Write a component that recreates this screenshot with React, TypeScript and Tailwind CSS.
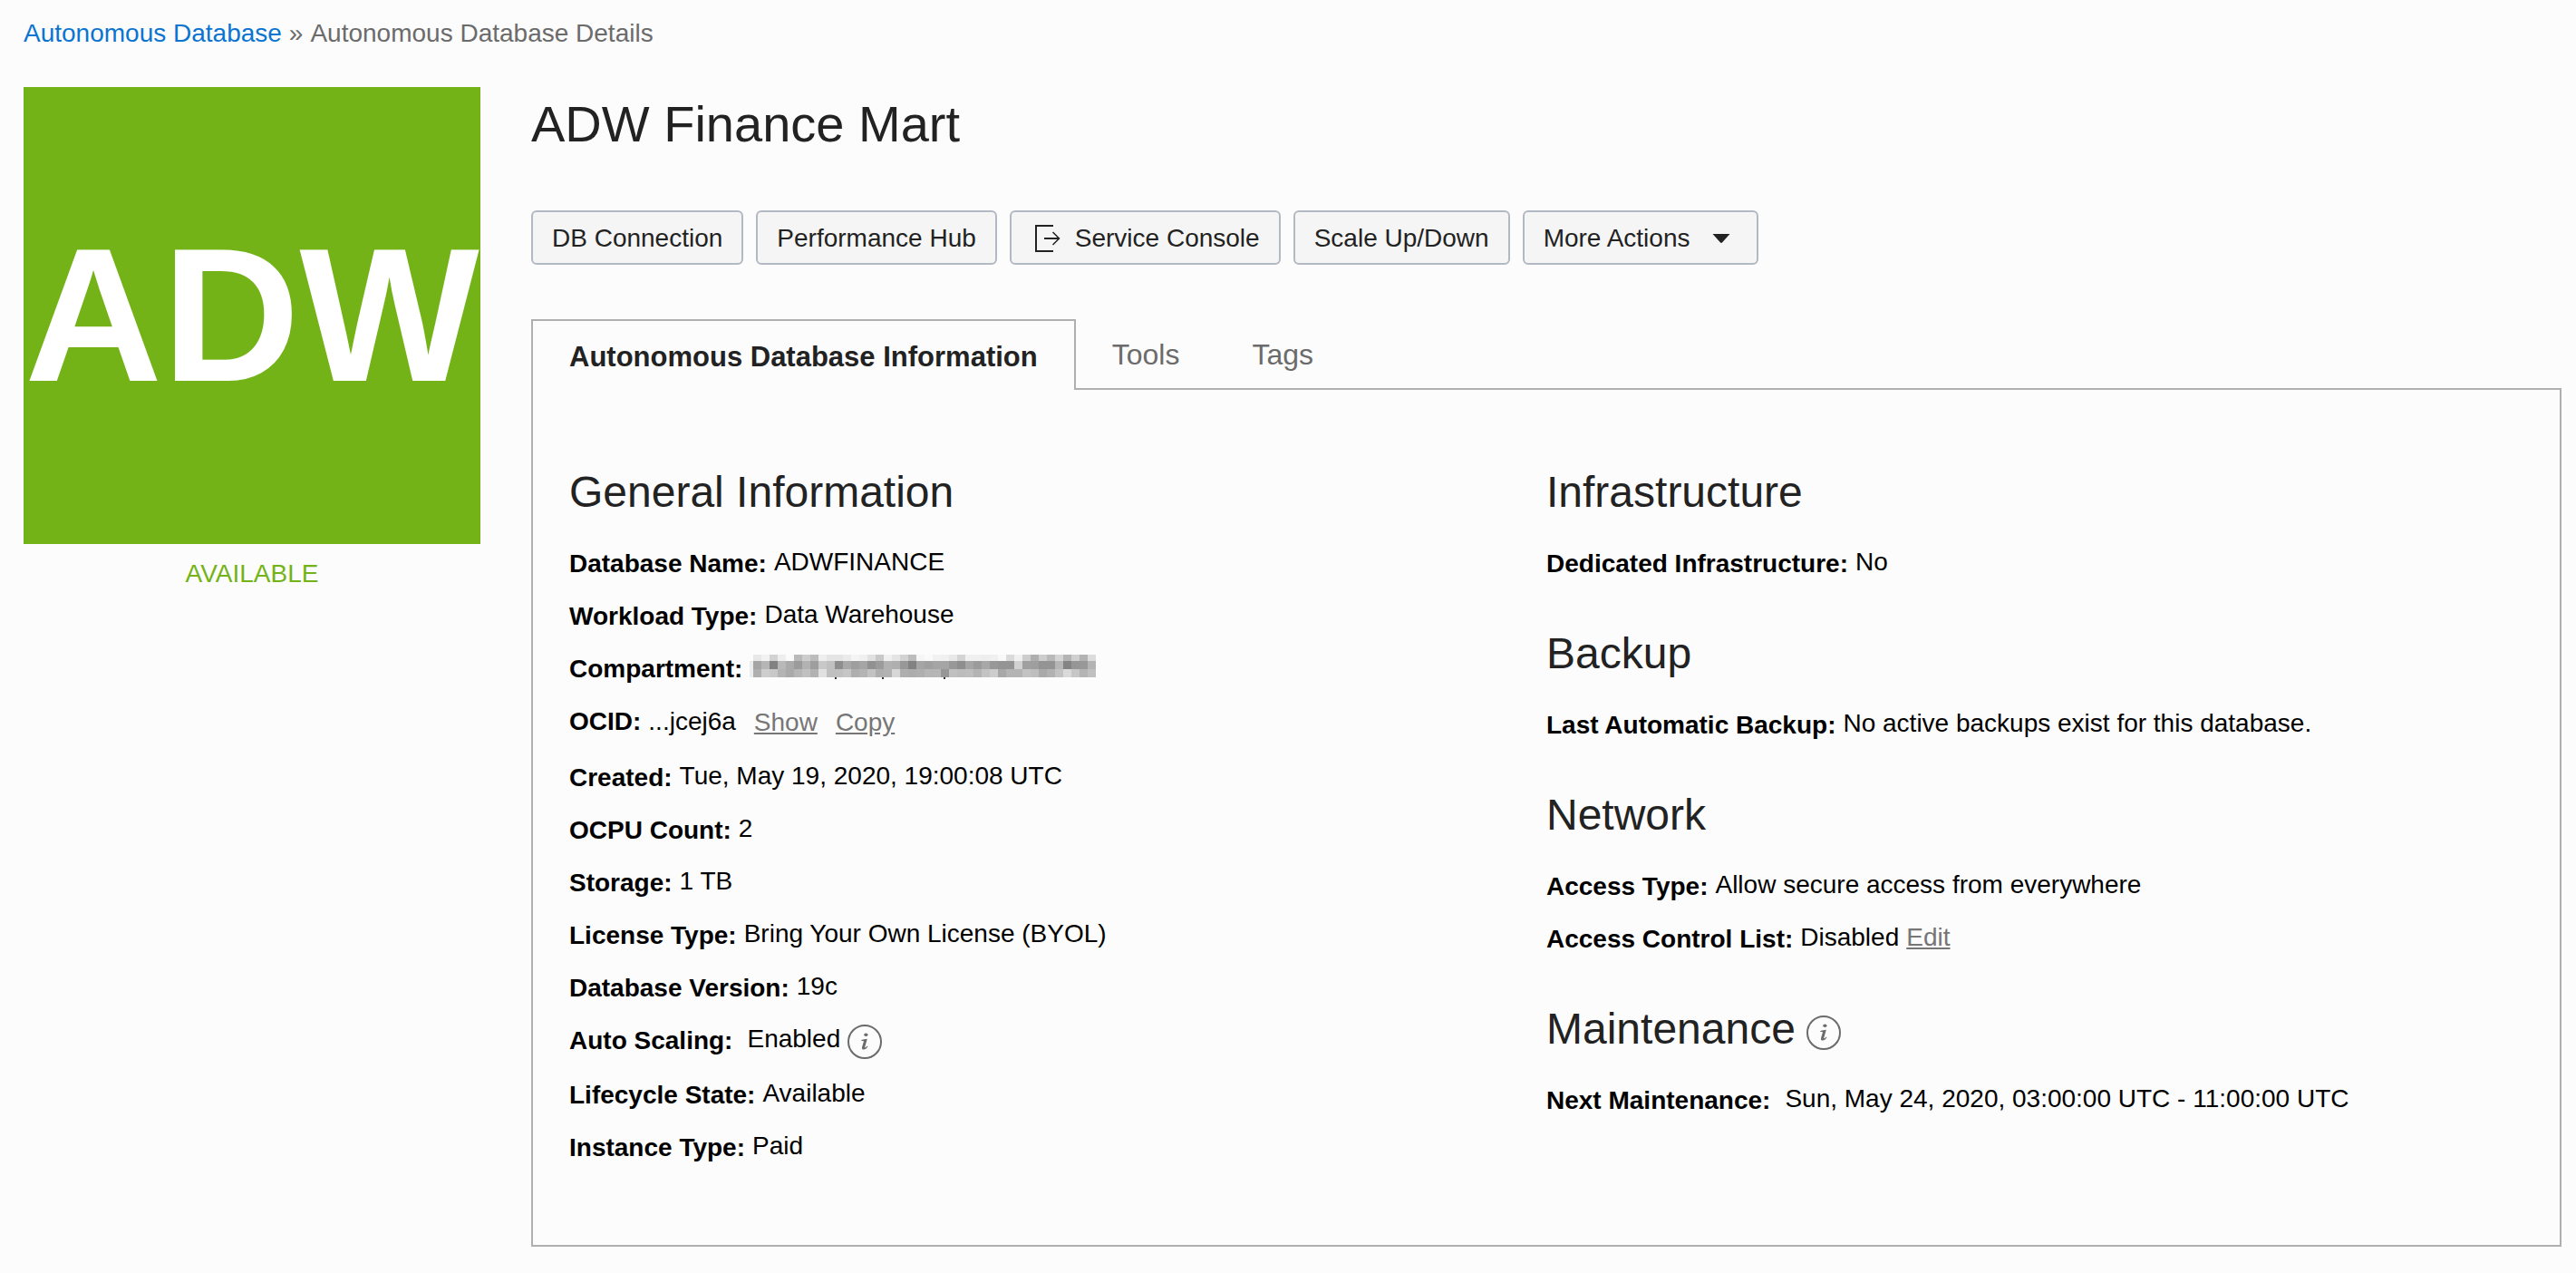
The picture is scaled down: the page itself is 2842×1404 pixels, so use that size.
import React from 'react';

const INK = 'text-[#222222]';

function InfoButton({ label }: { label: string }) {
  return (
    <button type="button" aria-label={label} className="h-[38px] w-[38px] shrink-0 text-[#6b6b6b]">
      <svg viewBox="0 0 38 38" className="block h-full w-full" fill="none">
        <circle cx="19" cy="19" r="18" stroke="currentColor" strokeWidth="2" />
        <ellipse cx="20.4" cy="11.2" rx="2.1" ry="1.8" fill="currentColor" />
        <path
          d="M15.300 17c2-.4 4.200-.8 6.500-1.200l-2.500 8.700c-.2.800 0 1.100.5.8c.7-.4 1.200-1 1.900-1.900l.8.600c-1.300 2.300-2.800 3.600-4.700 3.600c-1.600 0-2.200-1.100-1.700-2.900l1.700-5.600c.2-.8 0-1.100-.8-1.100h-1.700z"
          fill="currentColor"
        />
      </svg>
    </button>
  );
}

function Item({
  label,
  wide,
  tall,
  children,
}: {
  label: string;
  wide?: boolean;
  tall?: string;
  children: React.ReactNode;
}) {
  return (
    <div className={'flex items-start ' + (tall ?? 'h-[58px]')}>
      <dt className={'pt-[3px] leading-8 font-bold whitespace-nowrap ' + (wide ? 'mr-4' : 'mr-2')}>{label}</dt>
      <dd className="flex items-start pt-px leading-8 whitespace-nowrap">{children}</dd>
    </div>
  );
}

function Section({
  title,
  info,
  children,
}: {
  title: string;
  info?: string;
  children: React.ReactNode;
}) {
  return (
    <section className="mb-8">
      <h2 className={'mb-8 flex h-14 items-center text-[48px] leading-[56px] ' + INK}>
        {title}
        {info && (
          <span className="ml-3 flex pt-2">
            <InfoButton label={info} />
          </span>
        )}
      </h2>
      <dl>{children}</dl>
    </section>
  );
}

const ACTION =
  'flex h-[60px] items-center rounded-md border-2 border-[#b3b9c2] bg-[#f5f5f5] px-[21px] pt-[2px] text-[28px] whitespace-nowrap text-[#222222]';

const MOSAIC = [
  [
    232, 242, 210, 238, 250, 185, 205, 188, 238, 228, 228, 235, 245, 240, 225, 200, 240, 228, 210, 188, 246, 250, 242,
    240, 232, 212, 240, 240, 238, 240, 248, 218, 240, 205, 175, 205, 185, 212, 180, 208, 178, 220,
  ],
  [
    165, 182, 130, 184, 170, 155, 178, 158, 200, 192, 142, 168, 158, 165, 145, 155, 178, 175, 152, 130, 165, 160, 165,
    165, 152, 142, 165, 155, 168, 152, 148, 148, 210, 160, 158, 148, 148, 182, 132, 150, 152, 180,
  ],
  [
    175, 205, 200, 180, 170, 182, 192, 178, 225, 192, 192, 198, 175, 180, 195, 175, 178, 215, 175, 172, 175, 182, 182,
    150, 192, 188, 190, 180, 195, 205, 168, 180, 180, 195, 190, 170, 178, 195, 218, 198, 180, 192,
  ],
];

function HiddenValue({ label }: { label: string }) {
  return (
    <svg role="img" aria-label={label} viewBox="0 0 382 27" className="mt-[2px] h-[27px] w-[382px]" shapeRendering="crispEdges">
      <rect x="0" y="7" width="4" height="18" fill="#ececec" />
      {MOSAIC.map((row, y) =>
        row.map((v, x) => (
          <rect
            key={x + '-' + y}
            x={4 + x * 9}
            y={[0, 7, 16][y]}
            width={9}
            height={[7, 9, 9][y]}
            fill={'rgb(' + v + ',' + v + ',' + v + ')'}
          />
        )),
      )}
      {[94, 146, 214].map((x) => (
        <rect key={x} x={x} y="25" width="2" height="2" fill="#333333" />
      ))}
    </svg>
  );
}

export default function App() {
  return (
    <div className="min-h-screen bg-[#fcfcfc] pr-4 pb-[30px] pl-[26px] font-['Liberation_Sans',Arial,sans-serif] text-[28px] text-black">
      <nav aria-label="Breadcrumb" className="flex h-24 gap-2 pt-[21px] leading-8 text-[#6b6b6b]">
        <a href="#databases" className="text-[#0b74d1]">
          Autonomous Database
        </a>
        <span>»</span>
        <span>Autonomous Database Details</span>
      </nav>

      <div className="flex items-start gap-14">
        <aside className="w-[504px] shrink-0">
          <div className="flex aspect-square items-center justify-center bg-[#74b317] text-[210px] leading-none font-bold text-white">
            ADW
          </div>
          <p className="mt-[17px] text-center leading-8 text-[#74b317]">AVAILABLE</p>
        </aside>

        <main className="min-w-0 flex-1">
          <h1 className={'mt-[9px] mb-[63px] text-[56px] leading-16 ' + INK}>ADW Finance Mart</h1>

          <div className="flex gap-[14px]">
            <button type="button" className={ACTION}>
              DB Connection
            </button>
            <button type="button" className={ACTION}>
              Performance Hub
            </button>
            <button type="button" className={ACTION}>
              <svg viewBox="0 0 28 30" className="mr-4 ml-[5px] h-[30px] w-7" fill="none" stroke="currentColor">
                <path d="M20 1H1v28h19M10 15h16.500" strokeWidth="2" />
                <path d="M19.500 8l7 7l-7 7" strokeWidth="1.5" />
              </svg>
              Service Console
            </button>
            <button type="button" className={ACTION}>
              Scale Up/Down
            </button>
            <button type="button" className={ACTION}>
              More Actions
              <svg viewBox="0 0 20 10" className="mr-2 ml-6 h-[10px] w-5" fill="currentColor">
                <path d="M0.500 0h19L11 9.500q-1 .8-2 0z" />
              </svg>
            </button>
          </div>

          <div role="tablist" className="mt-[60px] flex h-[78px] items-start">
            <button
              type="button"
              role="tab"
              aria-selected="true"
              className="z-10 h-[78px] border-2 border-b-0 border-[#afafaf] bg-[#fcfcfc] px-10 pt-1 text-[31px] font-bold text-[#222222]"
            >
              Autonomous Database Information
            </button>
            <button type="button" role="tab" aria-selected="false" className="h-[76px] px-10 pt-[2px] text-[32px] text-[#6b6b6b]">
              Tools
            </button>
            <button type="button" role="tab" aria-selected="false" className="h-[76px] px-10 pt-[2px] text-[32px] text-[#6b6b6b]">
              Tags
            </button>
          </div>

          <div
            role="tabpanel"
            className="-mt-[2px] grid grid-cols-2 border-2 border-[#afafaf] px-10 pt-[85px] pb-9"
          >
            <div>
              <Section title="General Information">
                <Item label="Database Name:">ADWFINANCE</Item>
                <Item label="Workload Type:">Data Warehouse</Item>
                <Item label="Compartment:">
                  <HiddenValue label="Hidden compartment" />
                </Item>
                <Item label="OCID:" tall="h-[62px]">
                  <span className="pt-[2px]">...jcej6a</span>
                  <a href="#show" className="ml-5 pt-[3px] text-[#767676] underline">
                    Show
                  </a>
                  <a href="#copy" className="ml-5 pt-[3px] text-[#767676] underline">
                    Copy
                  </a>
                </Item>
                <Item label="Created:">Tue, May 19, 2020, 19:00:08 UTC</Item>
                <Item label="OCPU Count:">2</Item>
                <Item label="Storage:">1 TB</Item>
                <Item label="License Type:">Bring Your Own License (BYOL)</Item>
                <Item label="Database Version:">19c</Item>
                <Item label="Auto Scaling:" wide tall="h-[60px]">
                  <span className="mr-2">Enabled</span>
                  <InfoButton label="About auto scaling" />
                </Item>
                <Item label="Lifecycle State:">Available</Item>
                <Item label="Instance Type:">Paid</Item>
              </Section>
            </div>

            <div>
              <Section title="Infrastructure">
                <Item label="Dedicated Infrastructure:">No</Item>
              </Section>
              <Section title="Backup">
                <Item label="Last Automatic Backup:">No active backups exist for this database.</Item>
              </Section>
              <Section title="Network">
                <Item label="Access Type:">Allow secure access from everywhere</Item>
                <Item label="Access Control List:">
                  <span>Disabled</span>
                  <a href="#edit" className="ml-2 text-[#767676] underline">
                    Edit
                  </a>
                </Item>
              </Section>
              <Section title="Maintenance" info="About maintenance">
                <Item label="Next Maintenance:" wide>
                  Sun, May 24, 2020, 03:00:00 UTC - 11:00:00 UTC
                </Item>
              </Section>
            </div>
          </div>
        </main>
      </div>
    </div>
  );
}
